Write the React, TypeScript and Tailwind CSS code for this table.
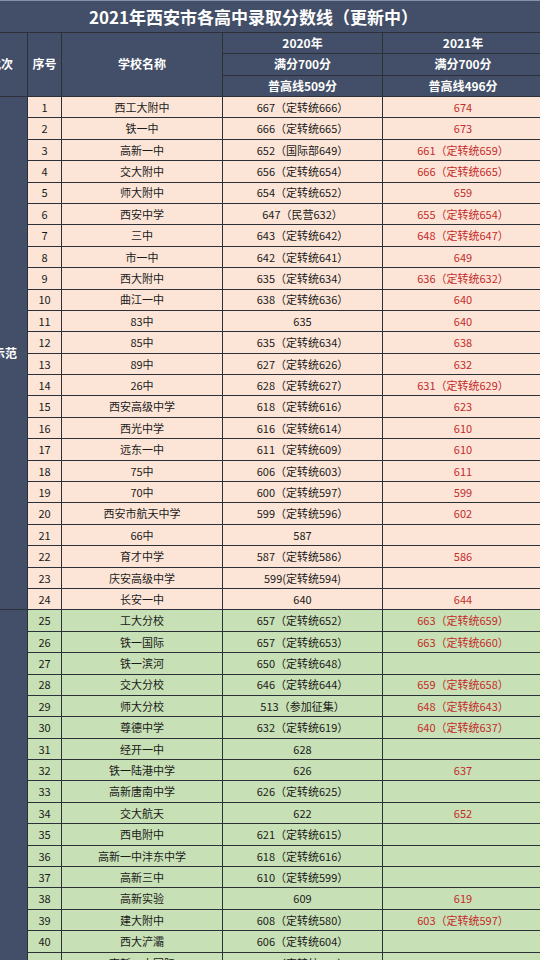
import * as React from "react";

type Row = [number, string, string, string];

const rows: Row[] = [
    [1, "西工大附中", "667（定转统666）", "674"],
    [2, "铁一中", "666（定转统665）", "673"],
    [3, "高新一中", "652（国际部649）", "661（定转统659）"],
    [4, "交大附中", "656（定转统654）", "666（定转统665）"],
    [5, "师大附中", "654（定转统652）", "659"],
    [6, "西安中学", "647（民营632）", "655（定转统654）"],
    [7, "三中", "643（定转统642）", "648（定转统647）"],
    [8, "市一中", "642（定转统641）", "649"],
    [9, "西大附中", "635（定转统634）", "636（定转统632）"],
    [10, "曲江一中", "638（定转统636）", "640"],
    [11, "83中", "635", "640"],
    [12, "85中", "635（定转统634）", "638"],
    [13, "89中", "627（定转统626）", "632"],
    [14, "26中", "628（定转统627）", "631（定转统629）"],
    [15, "西安高级中学", "618（定转统616）", "623"],
    [16, "西光中学", "616（定转统614）", "610"],
    [17, "远东一中", "611（定转统609）", "610"],
    [18, "75中", "606（定转统603）", "611"],
    [19, "70中", "600（定转统597）", "599"],
    [20, "西安市航天中学", "599（定转统596）", "602"],
    [21, "66中", "587", ""],
    [22, "育才中学", "587（定转统586）", "586"],
    [23, "庆安高级中学", "599(定转统594)", ""],
    [24, "长安一中", "640", "644"],
    [25, "工大分校", "657（定转统652）", "663（定转统659）"],
    [26, "铁一国际", "657（定转统653）", "663（定转统660）"],
    [27, "铁一滨河", "650（定转统648）", ""],
    [28, "交大分校", "646（定转统644）", "659（定转统658）"],
    [29, "师大分校", "513（参加征集）", "648（定转统643）"],
    [30, "尊德中学", "632（定转统619）", "640（定转统637）"],
    [31, "经开一中", "628", ""],
    [32, "铁一陆港中学", "626", "637"],
    [33, "高新唐南中学", "626（定转统625）", ""],
    [34, "交大航天", "622", "652"],
    [35, "西电附中", "621（定转统615）", ""],
    [36, "高新一中沣东中学", "618（定转统616）", ""],
    [37, "高新三中", "610（定转统599）", ""],
    [38, "高新实验", "609", "619"],
    [39, "建大附中", "608（定转统580）", "603（定转统597）"],
    [40, "西大浐灞", "606（定转统604）", ""],
    [41, "高新一中国际", "603（定转统601）", "615"],
    [42, "西航一中", "600（定转统598）", ""],
];

const head = "bg-[#434f68] text-white font-bold text-[12px] flex items-center justify-center";

export default function App() {
    return (
        <div className="w-[540px] h-[960px] overflow-hidden bg-[#434f68] font-['Noto_Sans_CJK_SC','Noto_Sans',sans-serif]">
            <div className="w-[543px] border-t border-[#8792a6] bg-[#2c3038] grid gap-px grid-cols-[27px_33px_160px_159px_160px] grid-rows-[31px_repeat(3,20.33px)_repeat(42,20.4px)]">
                <div className="col-span-5 bg-[#434f68] text-white font-bold text-[17px] flex items-center justify-center pr-[36px]">
                    2021年西安市各高中录取分数线（更新中）
                </div>

                <div className={`${head} row-span-3 !justify-end overflow-hidden whitespace-nowrap pr-[14px]`}>批次</div>
                <div className={`${head} row-span-3`}>序号</div>
                <div className={`${head} row-span-3`}>学校名称</div>
                <div className={head}>2020年</div>
                <div className={head}>2021年</div>
                <div className={head}>满分700分</div>
                <div className={head}>满分700分</div>
                <div className={head}>普高线509分</div>
                <div className={head}>普高线496分</div>

                <div className="row-span-24 bg-[#434f68] text-white font-bold text-[12px] flex items-center justify-end overflow-hidden whitespace-nowrap pr-[10px]">
                    省级示范
                </div>
                {rows.slice(0, 24).map((r) => (
                    <DataRow key={r[0]} row={r} green={false} />
                ))}

                <div className="row-span-18 bg-[#434f68]" />
                {rows.slice(24).map((r) => (
                    <DataRow key={r[0]} row={r} green={true} />
                ))}
            </div>
        </div>
    );
}

function DataRow(props: { row: Row; green: boolean }) {
    const { row, green } = props;
    const bg = green ? "bg-[#c8e0b5]" : "bg-[#fce5d7]";
    const cell = `${bg} flex items-center justify-center text-[11px] whitespace-nowrap`;
    return (
        <>
            <div className={`${cell} text-[#1a1a1a]`}>{row[0]}</div>
            <div className={`${cell} text-[#1a1a1a]`}>{row[1]}</div>
            <div className={`${cell} text-[#1a1a1a]`}>{row[2]}</div>
            <div className={`${cell} text-[#c42b2b]`}>{row[3]}</div>
        </>
    );
}
